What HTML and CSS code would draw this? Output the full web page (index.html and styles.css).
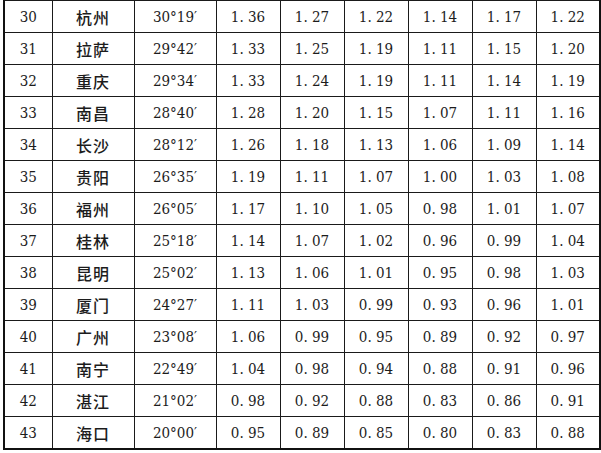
FILE: index.html
```html
<!DOCTYPE html>
<html>
<head>
<meta charset="utf-8">
<title>表</title>
<link rel="stylesheet" href="styles.css">
</head>
<body>
<table class="data">
<colgroup>
<col class="c-no"><col class="c-city"><col class="c-lat">
<col class="c-v"><col class="c-v"><col class="c-v"><col class="c-v"><col class="c-v"><col class="c-v">
</colgroup>
<tbody>
<tr><td>30</td><td class="city">杭州</td><td>30°19′</td><td>1. 36</td><td>1. 27</td><td>1. 22</td><td>1. 14</td><td>1. 17</td><td>1. 22</td></tr>
<tr><td>31</td><td class="city">拉萨</td><td>29°42′</td><td>1. 33</td><td>1. 25</td><td>1. 19</td><td>1. 11</td><td>1. 15</td><td>1. 20</td></tr>
<tr><td>32</td><td class="city">重庆</td><td>29°34′</td><td>1. 33</td><td>1. 24</td><td>1. 19</td><td>1. 11</td><td>1. 14</td><td>1. 19</td></tr>
<tr><td>33</td><td class="city">南昌</td><td>28°40′</td><td>1. 28</td><td>1. 20</td><td>1. 15</td><td>1. 07</td><td>1. 11</td><td>1. 16</td></tr>
<tr><td>34</td><td class="city">长沙</td><td>28°12′</td><td>1. 26</td><td>1. 18</td><td>1. 13</td><td>1. 06</td><td>1. 09</td><td>1. 14</td></tr>
<tr><td>35</td><td class="city">贵阳</td><td>26°35′</td><td>1. 19</td><td>1. 11</td><td>1. 07</td><td>1. 00</td><td>1. 03</td><td>1. 08</td></tr>
<tr><td>36</td><td class="city">福州</td><td>26°05′</td><td>1. 17</td><td>1. 10</td><td>1. 05</td><td>0. 98</td><td>1. 01</td><td>1. 07</td></tr>
<tr><td>37</td><td class="city">桂林</td><td>25°18′</td><td>1. 14</td><td>1. 07</td><td>1. 02</td><td>0. 96</td><td>0. 99</td><td>1. 04</td></tr>
<tr><td>38</td><td class="city">昆明</td><td>25°02′</td><td>1. 13</td><td>1. 06</td><td>1. 01</td><td>0. 95</td><td>0. 98</td><td>1. 03</td></tr>
<tr><td>39</td><td class="city">厦门</td><td>24°27′</td><td>1. 11</td><td>1. 03</td><td>0. 99</td><td>0. 93</td><td>0. 96</td><td>1. 01</td></tr>
<tr><td>40</td><td class="city">广州</td><td>23°08′</td><td>1. 06</td><td>0. 99</td><td>0. 95</td><td>0. 89</td><td>0. 92</td><td>0. 97</td></tr>
<tr><td>41</td><td class="city">南宁</td><td>22°49′</td><td>1. 04</td><td>0. 98</td><td>0. 94</td><td>0. 88</td><td>0. 91</td><td>0. 96</td></tr>
<tr><td>42</td><td class="city">湛江</td><td>21°02′</td><td>0. 98</td><td>0. 92</td><td>0. 88</td><td>0. 83</td><td>0. 86</td><td>0. 91</td></tr>
<tr><td>43</td><td class="city">海口</td><td>20°00′</td><td>0. 95</td><td>0. 89</td><td>0. 85</td><td>0. 80</td><td>0. 83</td><td>0. 88</td></tr>
</tbody>
</table>
</body>
</html>
```
FILE: styles.css
```css
html, body {
  margin: 0;
  padding: 0;
  background: #ffffff;
}

body {
  padding-left: 3px;
}

.data {
  border-collapse: collapse;
  table-layout: fixed;
  width: 597px;
  border-left: 2px solid #111;
  border-right: 2px solid #111;
  border-bottom: 2px solid #111;
  border-top: 1px solid #333;
  color: #1c1c1c;
}

.c-no { width: 48px; }
.c-city { width: 82px; }
.c-lat { width: 82px; }
.c-v { width: 64px; }

.data td {
  height: 31px;
  padding: 0;
  text-align: center;
  vertical-align: middle;
  border: 1.5px solid #1a1a1a;
  white-space: nowrap;
  font-family: "DejaVu Serif Condensed", "DejaVu Serif", serif;
  font-stretch: condensed;
  font-size: 15px;
}

.data td.city {
  font-family: "Noto Sans CJK SC", sans-serif;
  font-stretch: normal;
  font-weight: 500;
  font-size: 16px;
  letter-spacing: 1px;
}
```
